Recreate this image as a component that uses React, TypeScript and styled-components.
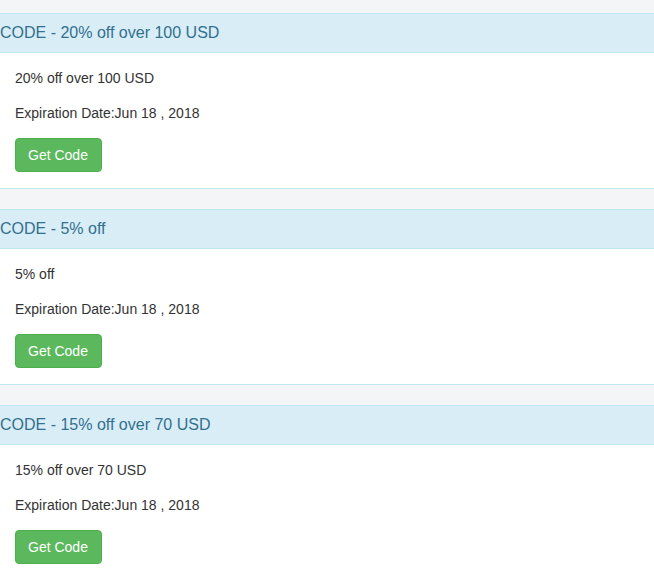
import React from 'react';
import styled, { createGlobalStyle } from 'styled-components';

const GlobalStyle = createGlobalStyle`
  html, body {
    margin: 0;
    padding: 0;
    background: #f4f5f7;
    font-family: 'Liberation Sans', Arial, sans-serif;
    font-size: 14px;
    line-height: 1.42857;
    color: #333;
  }
`;

const Page = styled.div`
  padding-top: 13px;
`;

const Panel = styled.section`
  background: #fff;
  border-top: 1px solid #bce8f1;
  border-bottom: 1px solid #bce8f1;
  margin-bottom: 20px;
`;

const PanelHeading = styled.div`
  background: #d9edf7;
  color: #31708f;
  border-bottom: 1px solid #bce8f1;
  padding: 10px 0;
`;

const PanelTitle = styled.h3`
  margin: 0;
  font-size: 16px;
  font-weight: normal;
  line-height: 18px;
`;

const PanelBody = styled.div`
  padding: 15px 15px 16px;
  display: flex;
  flex-direction: column;
  align-items: flex-start;
  gap: 15px;
`;

const Line = styled.p`
  margin: 0;
  line-height: 20px;
`;

const GetCodeButton = styled.button`
  font-family: inherit;
  font-size: 14px;
  line-height: 20px;
  padding: 6px 13px 6px 12px;
  color: #fff;
  background: #5cb85c;
  border: 1px solid #4cae4c;
  border-radius: 4px;
  cursor: pointer;

  &:hover {
    background: #449d44;
  }
`;

interface Coupon {
  title: string;
  expires: string;
}

const coupons: Coupon[] = [
  { title: '20% off over 100 USD', expires: 'Jun 18 , 2018' },
  { title: '5% off', expires: 'Jun 18 , 2018' },
  { title: '15% off over 70 USD', expires: 'Jun 18 , 2018' },
];

const App: React.FC = () => {
  return (
    <>
      <GlobalStyle />
      <Page>
        {coupons.map((c) => (
          <Panel key={c.title}>
            <PanelHeading>
              <PanelTitle>CODE - {c.title}</PanelTitle>
            </PanelHeading>
            <PanelBody>
              <Line>{c.title}</Line>
              <Line>Expiration Date:{c.expires}</Line>
              <GetCodeButton>Get Code</GetCodeButton>
            </PanelBody>
          </Panel>
        ))}
      </Page>
    </>
  );
};

export default App;
